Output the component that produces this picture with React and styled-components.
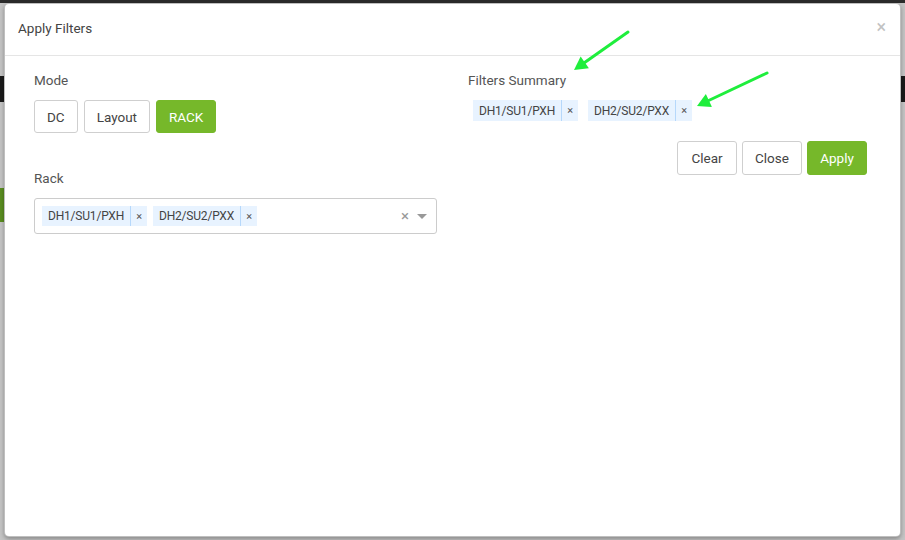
import React from "react";
import styled, { createGlobalStyle } from "styled-components";

const GlobalStyle = createGlobalStyle`
  html, body {
    margin: 0;
    padding: 0;
    background: #ffffff;
    font-family: "Roboto", "Liberation Sans", sans-serif;
  }
`;

const GREEN = "#76b82a";

/* page behind the dialog */
const Page = styled.div`
  position: relative;
  width: 905px;
  height: 540px;
  overflow: hidden;
  background: #ffffff;
`;

const TopNav = styled.div`
  height: 3px;
  background: #383838;
`;

const PageToolbar = styled.div`
  margin-top: 73px;
  height: 26px;
  background: #222;
`;

const PageButton = styled.div`
  margin-top: 86px;
  width: 60px;
  height: 34px;
  background: ${GREEN};
`;

/* dialog */
const Backdrop = styled.div`
  position: absolute;
  inset: 0;
  background: rgba(0, 0, 0, 0.23);
  padding: 3px 4px;
  box-sizing: border-box;
`;

const Modal = styled.div`
  position: relative;
  height: 534px;
  background: #fff;
  border: 1px solid rgba(0, 0, 0, 0.25);
  border-radius: 5px;
  box-shadow: 0 2px 4px rgba(0, 0, 0, 0.3);
  box-sizing: border-box;
`;

const Header = styled.div`
  display: flex;
  align-items: center;
  justify-content: space-between;
  height: 51px;
  padding: 0 14px 0 13px;
  border-bottom: 1px solid #e5e5e5;
`;

const Title = styled.div`
  font-size: 13.5px;
  color: #444;
  margin-bottom: 3px;
`;

const CloseX = styled.span`
  font-size: 18px;
  line-height: 1;
  color: #c2c2c2;
  margin-bottom: 5px;
`;

const Body = styled.div`
  display: grid;
  grid-template-columns: 403px 399px;
  column-gap: 31px;
  padding: 15px 0 0 29px;
`;

const Column = styled.div`
  display: flex;
  flex-direction: column;
`;

const FieldLabel = styled.div`
  font-size: 13.5px;
  line-height: 18px;
  color: #555;
  margin-top: ${(p) => p.$top || 0}px;
  margin-bottom: 11px;
`;

const ButtonRow = styled.div`
  display: flex;
  gap: ${(p) => p.$gap || 5}px;
  justify-content: ${(p) => (p.$end ? "flex-end" : "flex-start")};
  margin-top: ${(p) => p.$top || 0}px;
`;

const Button = styled.button`
  height: ${(p) => p.$h || 33}px;
  min-width: ${(p) => p.$w || 0}px;
  padding: 0 12px;
  border-radius: 3px;
  border: 1px solid ${(p) => (p.$primary ? GREEN : "#cfcfcf")};
  background: ${(p) => (p.$primary ? GREEN : "#fff")};
  color: ${(p) => (p.$primary ? "#fff" : "#444")};
  font-family: "Roboto", "Liberation Sans", sans-serif;
  font-size: 13.5px;
  box-sizing: border-box;
`;

const TagList = styled.div`
  display: flex;
  gap: ${(p) => p.$gap || 6}px;
  padding-left: ${(p) => p.$pad || 0}px;
`;

const Tag = styled.div`
  display: flex;
  align-items: stretch;
  height: ${(p) => p.$h || 20}px;
  background: #e8f3ff;
  color: #444;
  font-size: 12px;
  letter-spacing: -0.2px;
`;

const TagText = styled.span`
  display: flex;
  align-items: center;
  padding: 0 6px;
`;

const TagRemove = styled.span`
  display: flex;
  align-items: center;
  justify-content: center;
  width: 16px;
  border-left: 1px solid #b6d8fb;
  font-size: 11px;
  color: #555;
`;

const Select = styled.div`
  display: flex;
  align-items: center;
  height: 36px;
  border: 1px solid #cccccc;
  border-radius: 3px;
  padding: 0 9px 0 7px;
  box-sizing: border-box;
`;

const SelectValues = styled.div`
  flex: 1;
`;

const ClearAll = styled.span`
  font-size: 15px;
  color: #999;
  margin-right: 8px;
`;

const Caret = styled.span`
  width: 0;
  height: 0;
  border-left: 5px solid transparent;
  border-right: 5px solid transparent;
  border-top: 5px solid #999;
`;

const Annotations = styled.svg`
  position: absolute;
  left: -5px;
  top: -4px;
  width: 905px;
  height: 540px;
  pointer-events: none;
`;

const Arrow = ({ x1, y1, x2, y2 }) => {
  const a = Math.atan2(y2 - y1, x2 - x1);
  const len = 15;
  const spread = 0.5;
  const p1 = [x2 - len * Math.cos(a - spread), y2 - len * Math.sin(a - spread)];
  const p2 = [x2 - len * Math.cos(a + spread), y2 - len * Math.sin(a + spread)];
  const bx = x2 - 10 * Math.cos(a);
  const by = y2 - 10 * Math.sin(a);
  return (
    <g>
      <line x1={x1} y1={y1} x2={bx} y2={by} stroke="#1fee3c" strokeWidth="3" strokeLinecap="round" />
      <polygon points={`${x2},${y2} ${p1[0]},${p1[1]} ${p2[0]},${p2[1]}`} fill="#1fee3c" />
    </g>
  );
};

const racks = ["DH1/SU1/PXH", "DH2/SU2/PXX"];

const App = () => {
  return (
    <Page>
      <GlobalStyle />
      <TopNav />
      <PageToolbar />
      <PageButton />
      <Backdrop>
        <Modal>
          <Header>
            <Title>Apply Filters</Title>
            <CloseX>×</CloseX>
          </Header>
          <Body>
            <Column>
              <FieldLabel>Mode</FieldLabel>
              <ButtonRow $gap={6}>
                <Button>DC</Button>
                <Button>Layout</Button>
                <Button $primary>RACK</Button>
              </ButtonRow>
              <FieldLabel $top={36}>Rack</FieldLabel>
              <Select>
                <SelectValues>
                  <TagList $gap={6}>
                    {racks.map((r) => (
                      <Tag key={r}>
                        <TagText>{r}</TagText>
                        <TagRemove>×</TagRemove>
                      </Tag>
                    ))}
                  </TagList>
                </SelectValues>
                <ClearAll>×</ClearAll>
                <Caret />
              </Select>
            </Column>
            <Column>
              <FieldLabel>Filters Summary</FieldLabel>
              <TagList $gap={10} $pad={5}>
                {racks.map((r) => (
                  <Tag key={r} $h={21}>
                    <TagText>{r}</TagText>
                    <TagRemove>×</TagRemove>
                  </Tag>
                ))}
              </TagList>
              <ButtonRow $end $top={20}>
                <Button $h={34} $w={60}>Clear</Button>
                <Button $h={34} $w={60}>Close</Button>
                <Button $h={34} $w={60} $primary>Apply</Button>
              </ButtonRow>
            </Column>
          </Body>
          <Annotations viewBox="0 0 905 540">
            <Arrow x1={628} y1={32} x2={574} y2={70} />
            <Arrow x1={767} y1={73} x2={697} y2={106} />
          </Annotations>
        </Modal>
      </Backdrop>
    </Page>
  );
};

export default App;
